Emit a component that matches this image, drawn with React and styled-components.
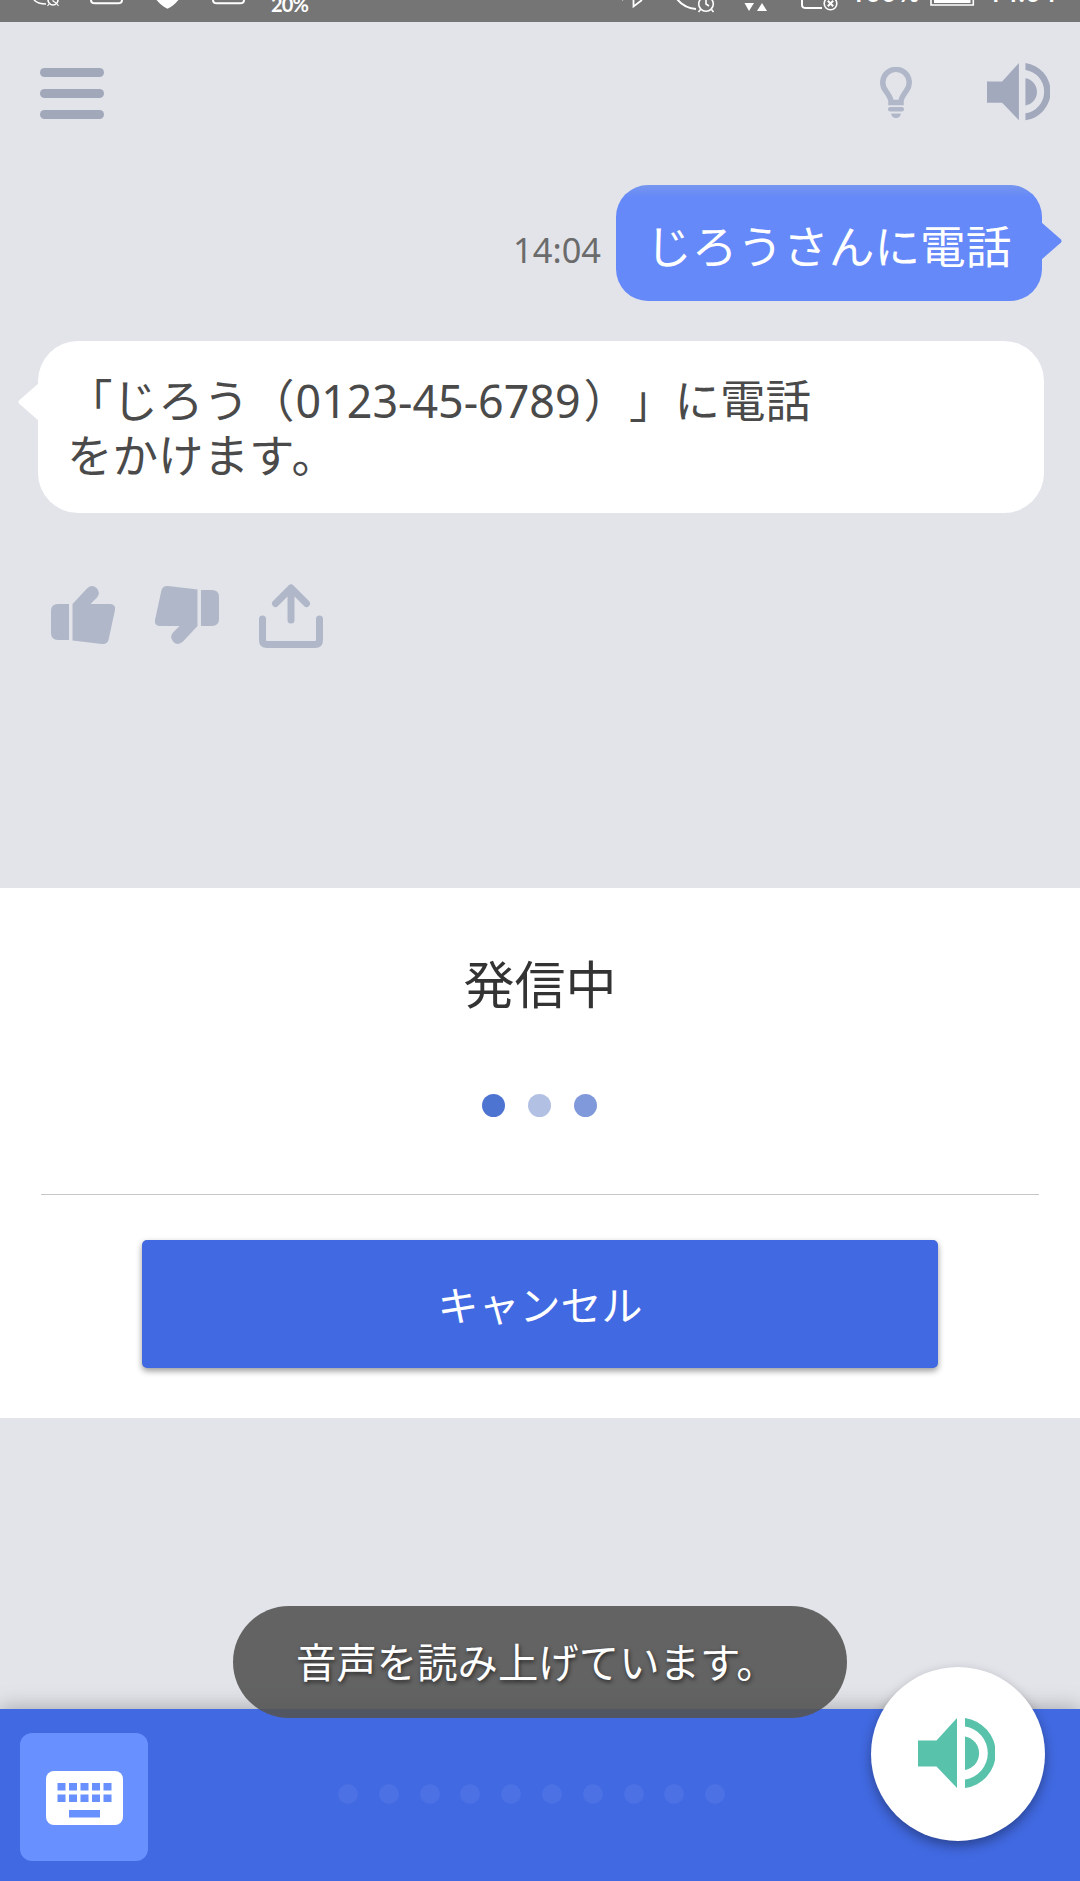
import styled, { createGlobalStyle } from "styled-components";

const KEYS = [0, 1, 2, 3, 4];
const LEVELS = [0, 1, 2, 3, 4, 5, 6, 7, 8, 9];

function SpeakerIcon({ size, color }) {
    return (
        <SpeakerSvg viewBox="0 0 77 70" $size={size} $color={color}>
            <path d="M0 22.5H18.500L39 0V70L18.500 48.500H0z" />
            <path d="M47 18.500A17 17 0 0 1 47 52z" />
            <path d="M47 0A35.300 35.300 0 0 1 47 70V61.500A26.800 26.800 0 0 0 47 8.500z" />
        </SpeakerSvg>
    );
}

function StatusBar() {
    return (
        <StatusWrapper>
            <StatusSvg viewBox="0 0 1080 22">
                <g fill="none" stroke="#fff" strokeWidth="1.6">
                    <path d="M34 0Q38 4 46 4" />
                    <circle cx="53" cy="0" r="5" />
                    <path d="M53 -4V1L56 3M49 4L47.500 6M57 4L58.500 6" strokeWidth="1.1" />
                    <path d="M91 -5V0Q91 3.300 95 3.300H118Q122 3.300 122 0V-5" strokeWidth="2" />
                    <path d="M213 -5V0Q213 3.300 217 3.300H240Q244 3.300 244 0V-5" strokeWidth="2" />
                    <path d="M622 0L625 -3M633.500 -3V6.500L642 0" strokeWidth="1.8" />
                    <path d="M677 -1Q684 8 696 9" strokeWidth="2" />
                    <circle cx="706" cy="4" r="7.300" />
                    <path d="M706 -1V4L709 6M700.500 9.500L698.500 12M711.500 9.500L713.500 12" />
                    <path d="M802 -4V5Q802 8 806 8H822" strokeWidth="2" />
                    <circle cx="830.500" cy="3.500" r="6.300" />
                    <path d="M827.800 0.800L833.200 6.200M833.200 0.800L827.800 6.200" strokeWidth="2" />
                    <path d="M931 -4V5H973.300V-4" strokeWidth="1.6" />
                </g>
                <path d="M155 -2Q161 6 167.500 8.700Q174 6 180 -2z" fill="#fff" />
                <path d="M744.500 3H754L749 11zM757 11H767L762 3z" fill="#fff" />
                <path d="M934 -4H970.500V3H934z" fill="#fff" />
            </StatusSvg>
            <Battery>20%</Battery>
            <Percent>100%</Percent>
            <Clock>14:04</Clock>
        </StatusWrapper>
    );
}

function Header() {
    return (
        <HeaderWrapper>
            <Menu>
                <MenuLine />
                <MenuLine />
                <MenuLine />
            </Menu>
            <HeaderIcons>
                <Bulb viewBox="0 0 32 51">
                    <path
                        d="M11 35.500V34Q10.500 30.500 5.500 23.500A13.200 13.200 0 1 1 26.500 23.500Q21.500 30.500 21 34V35.500z"
                        fill="none"
                        stroke="#b0b7c8"
                        strokeWidth="5.500"
                    />
                    <rect x="8" y="40" width="16" height="4.400" rx="2.200" fill="#b0b7c8" />
                    <path d="M11 46.500H21Q20 51 16 51Q12 51 11 46.500z" fill="#b0b7c8" />
                </Bulb>
                <SpeakerIcon size={63} color="#a2a9bd" />
            </HeaderIcons>
        </HeaderWrapper>
    );
}

function Feedback() {
    return (
        <FeedbackWrapper>
            <ActionIcon viewBox="0 0 64 64">
                <path d="M7 20H18V56H7Q0 56 0 49V27Q0 20 7 20z" />
                <path d="M21.500 20L36 4.500Q41 0 45.500 4Q50 8.500 46 13.500L39.500 20H59Q65 20.500 64 26L57.500 56Q56 60.500 51 60L21.500 56.500z" />
            </ActionIcon>
            <ActionIcon viewBox="0 0 64 64">
                <g transform="rotate(180 32 31)">
                    <path d="M7 20H18V56H7Q0 56 0 49V27Q0 20 7 20z" />
                    <path d="M21.500 20L36 4.500Q41 0 45.500 4Q50 8.500 46 13.500L39.500 20H59Q65 20.500 64 26L57.500 56Q56 60.500 51 60L21.500 56.500z" />
                </g>
            </ActionIcon>
            <ShareIcon viewBox="0 0 64 64">
                <path d="M3.500 35V56Q3.500 60.500 8 60.500H56Q60.500 60.500 60.500 56V35M32 36V4M16.500 19.500L32 4L47.500 19.500" />
            </ShareIcon>
        </FeedbackWrapper>
    );
}

function KeyboardIcon() {
    return (
        <KeyboardSvg viewBox="0 0 77 54">
            <rect width="77" height="54" rx="8" fill="#fff" />
            {KEYS.map((key) => (
                <g key={key} fill="#6990ff">
                    <rect x={11.5 + key * 11.5} y="12" width="8" height="7.500" />
                    <rect x={11.5 + key * 11.5} y="23.500" width="8" height="7.500" />
                </g>
            ))}
            <rect x="23" y="39" width="31" height="7.500" fill="#6990ff" />
        </KeyboardSvg>
    );
}

function App() {
    return (
        <Page>
            <GlobalStyle />
            <StatusBar />
            <Header />
            <Chat>
                <UserRow>
                    <Time>14:04</Time>
                    <UserBubble>
                        じろうさんに電話
                        <UserTail viewBox="0 0 21 38">
                            <path d="M0 0L20 17.500Q21 19 20 20.500L0 38z" />
                        </UserTail>
                    </UserBubble>
                </UserRow>
                <ReplyBubble>
                    <ReplyTail viewBox="0 0 21 38">
                        <path d="M21 0L1 17.500Q0 19 1 20.500L21 38z" />
                    </ReplyTail>
                    「じろう（<PhoneNumber>0123-45-6789</PhoneNumber>）」に電話
                    <br />
                    をかけま<Tight>す</Tight>。
                </ReplyBubble>
                <Feedback />
            </Chat>
            <Dialog>
                <Title>発信中</Title>
                <Loading>
                    <LoadingDot $color="#4e74d2" />
                    <LoadingDot $color="#b2c0e3" />
                    <LoadingDot $color="#8099da" />
                </Loading>
                <Divider />
                <CancelButton>キャンセル</CancelButton>
            </Dialog>
            <Spacer />
            <BottomBar>
                <KeyboardButton>
                    <KeyboardIcon />
                </KeyboardButton>
                <Levels>
                    {LEVELS.map((level) => (
                        <LevelDot key={level} />
                    ))}
                </Levels>
                <Toast>音声を読み上げています。</Toast>
                <SpeakButton>
                    <SpeakerIcon size={77} color="#59c2ab" />
                </SpeakButton>
            </BottomBar>
        </Page>
    );
}

export default App;

const GlobalStyle = createGlobalStyle`
    * {
        box-sizing: border-box;
    }

    body {
        margin: 0;
        font-family: "Noto Sans", "Noto Sans CJK JP", sans-serif;
        text-spacing-trim: space-all;
    }
`;

const Page = styled.div`
    width: 1080px;
    height: 1881px;
    display: flex;
    flex-direction: column;
    overflow: hidden;
    background: #e3e4ea;
`;

const StatusWrapper = styled.div`
    position: relative;
    height: 22px;
    flex: none;
    overflow: hidden;
    background: #757575;
    color: white;
`;

const StatusSvg = styled.svg`
    display: block;
    width: 1080px;
    height: 22px;
`;

const StatusText = styled.span`
    position: absolute;
    line-height: 30px;
    white-space: nowrap;
`;

const Battery = styled(StatusText)`
    left: 271px;
    top: -11px;
    font-family: Lato, sans-serif;
    font-size: 20px;
    font-weight: 700;
    letter-spacing: -0.8px;
`;

const Percent = styled(StatusText)`
    left: 850px;
    top: -23px;
    font-family: "Open Sans", sans-serif;
    font-size: 27px;
    font-weight: 600;
`;

const Clock = styled(StatusText)`
    left: 987px;
    top: -23px;
    font-family: "Open Sans", sans-serif;
    font-size: 27px;
    font-weight: 600;
`;

const HeaderWrapper = styled.div`
    height: 141px;
    flex: none;
    display: flex;
    align-items: center;
    justify-content: space-between;
    padding: 0 30px 0 40px;
`;

const Menu = styled.div`
    display: flex;
    flex-direction: column;
    gap: 12px;
    margin-top: 2px;
`;

const MenuLine = styled.div`
    width: 64px;
    height: 9px;
    border-radius: 5px;
    background: #a0a8ba;
`;

const HeaderIcons = styled.div`
    display: flex;
    align-items: center;
    gap: 75px;
    margin-top: -1px;
`;

const Bulb = styled.svg`
    width: 32px;
    height: 51px;
    margin-top: 1px;
`;

const SpeakerSvg = styled.svg`
    width: ${(props) => props.$size}px;
    height: ${(props) => props.$size * 0.91}px;
    fill: ${(props) => props.$color};
`;

const Chat = styled.div`
    height: 725px;
    flex: none;
    padding: 22px 36px 0 38px;
`;

const UserRow = styled.div`
    display: flex;
    justify-content: flex-end;
    align-items: center;
    gap: 15px;
    padding-right: 2px;
`;

const Time = styled.span`
    padding-top: 13px;
    font-size: 34.4px;
    line-height: 48px;
    color: #6b6b6b;
`;

const Bubble = styled.div`
    position: relative;
    line-height: 55px;
    white-space: nowrap;
`;

const UserBubble = styled(Bubble)`
    width: 426px;
    height: 116px;
    padding: 34px 0 0 30px;
    border-radius: 32px;
    background: linear-gradient(#7796ef, #6589f8 12px);
    font-size: 45.7px;
    color: white;
`;

const ReplyBubble = styled(Bubble)`
    height: 172px;
    margin-top: 40px;
    padding: 32px 0 0 29px;
    border-radius: 40px;
    background: white;
    font-size: 45.5px;
    color: #4a4a4a;
`;

const PhoneNumber = styled.span`
    margin: 0 3px 0 1px;
    font-size: 44.8px;
`;

const Tight = styled.span`
    letter-spacing: -3px;
`;

const UserTail = styled.svg`
    position: absolute;
    left: 100%;
    top: 37px;
    width: 21px;
    height: 38px;
    margin-left: -1px;
    fill: #6589f8;
`;

const ReplyTail = styled.svg`
    position: absolute;
    left: -20px;
    top: 42px;
    width: 21px;
    height: 38px;
    fill: white;
`;

const FeedbackWrapper = styled.div`
    display: flex;
    gap: 40px;
    margin-top: 71px;
    padding-left: 13px;
`;

const ActionIcon = styled.svg`
    width: 64px;
    height: 64px;
    fill: #b0b7c8;
`;

const ShareIcon = styled.svg`
    width: 64px;
    height: 64px;
    fill: none;
    stroke: #b0b7c8;
    stroke-width: 7;
    stroke-linecap: round;
    stroke-linejoin: round;
`;

const Dialog = styled.div`
    height: 530px;
    flex: none;
    display: flex;
    flex-direction: column;
    align-items: center;
    padding-top: 60px;
    background: white;
`;

const Title = styled.div`
    height: 74px;
    font-size: 51px;
    line-height: 72px;
    color: #333;
`;

const Loading = styled.div`
    display: flex;
    gap: 23px;
    margin: 72px 1px 0 0;
`;

const LoadingDot = styled.div`
    width: 23px;
    height: 23px;
    border-radius: 50%;
    background: ${(props) => props.$color};
`;

const Divider = styled.div`
    width: 998px;
    height: 1px;
    margin-top: 77px;
    background: #c6c6c6;
`;

const CancelButton = styled.button`
    width: 796px;
    height: 128px;
    margin-top: 45px;
    padding: 0 0 2px;
    border: none;
    border-radius: 5px;
    background: #4169e1;
    box-shadow: 0 3px 6px rgba(0, 0, 0, 0.4);
    font-family: inherit;
    font-size: 41px;
    color: white;
`;

const Spacer = styled.div`
    flex: 1;
`;

const BottomBar = styled.div`
    position: relative;
    height: 172px;
    flex: none;
    display: flex;
    align-items: center;
    padding: 0 20px;
    background: #4169e1;
    box-shadow: 0 -1px 20px rgba(0, 0, 0, 0.28);
`;

const KeyboardButton = styled.div`
    width: 128px;
    height: 128px;
    margin-top: 4px;
    display: flex;
    align-items: center;
    justify-content: center;
    border-radius: 12px;
    background: #6990ff;
`;

const KeyboardSvg = styled.svg`
    width: 77px;
    height: 54px;
    margin-top: 2px;
`;

const Levels = styled.div`
    display: flex;
    gap: 20.8px;
    margin: -2px 0 0 190px;
`;

const LevelDot = styled.div`
    width: 20px;
    height: 20px;
    border-radius: 50%;
    background: #4b71e4;
`;

const Toast = styled.div`
    position: absolute;
    left: 233px;
    top: -103px;
    width: 614px;
    height: 112px;
    padding-left: 63px;
    border-radius: 56px;
    background: rgba(84, 84, 84, 0.9);
    font-size: 40.4px;
    line-height: 113px;
    color: white;
    text-shadow: 1px 2px 4px rgba(0, 0, 0, 0.6);
    white-space: nowrap;
`;

const SpeakButton = styled.div`
    position: absolute;
    left: 871px;
    top: -42px;
    width: 174px;
    height: 174px;
    display: flex;
    align-items: center;
    justify-content: center;
    padding: 0 3px 1px 0;
    border-radius: 50%;
    background: white;
    box-shadow: 0 5px 12px rgba(0, 0, 0, 0.35);
`;
